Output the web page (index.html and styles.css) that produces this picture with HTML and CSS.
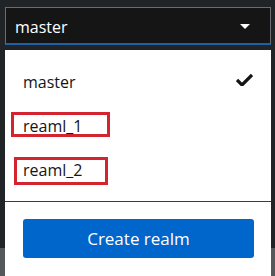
FILE: index.html
```html
<!DOCTYPE html>
<html lang="en">
<head>
    <meta charset="UTF-8">
    <meta name="viewport" content="width=device-width, initial-scale=1.0">
    <title>Realm selector</title>
    <link rel="stylesheet" href="styles.css">
</head>
<body>
    <div class="realm-select">
        <button class="toggle">
            <span class="toggle-text">master</span>
            <svg class="caret" width="10" height="5" viewBox="0 0 10 5"><path d="M0 0h10L5 5z" fill="#ffffff"/></svg>
        </button>
        <div class="menu">
            <ul class="menu-list">
                <li class="menu-item">
                    <span>master</span>
                    <svg class="check" width="17" height="13" viewBox="0 0 17 13"><path d="M1 7l5 5L16 2" fill="none" stroke="#151515" stroke-width="3.2"/></svg>
                </li>
                <li class="menu-item">
                    <span>reaml_1</span>
                    <span class="annot annot-one"></span>
                </li>
                <li class="menu-item">
                    <span>reaml_2</span>
                    <span class="annot annot-two"></span>
                </li>
            </ul>
            <hr class="divider">
            <div class="menu-footer">
                <button class="create-button">Create realm</button>
            </div>
        </div>
    </div>
</body>
</html>
```

FILE: styles.css
```css
body {
    margin: 0;
    font-family: "Open Sans", Arial, sans-serif;
    font-size: 16px;
    background: linear-gradient(#212427 248px, #55585b 248px);
    min-height: 276px;
}

.realm-select {
    padding: 7px 4px 0 5px;
}

.toggle {
    display: flex;
    align-items: center;
    justify-content: space-between;
    width: 100%;
    height: 38px;
    padding: 2px 20px 0 9px;
    background-color: #151515;
    border: 1px solid #6a6e73;
    border-bottom: 2px solid #1f5fa6;
    color: #ffffff;
    font-family: inherit;
    font-size: 16px;
    box-sizing: border-box;
}

.menu {
    margin-top: 5px;
    background-color: #ffffff;
    padding-top: 10px;
    height: 226px;
    box-sizing: border-box;
}

.menu-list {
    list-style: none;
    margin: 0;
    padding: 0;
}

.menu-item {
    position: relative;
    display: flex;
    align-items: center;
    justify-content: space-between;
    height: 44px;
    padding: 0 18px 0 18px;
    color: #151515;
    line-height: 24px;
}

.check {
    margin-top: -6px;
}

/* red annotation boxes drawn over the items */
.annot {
    position: absolute;
    border: 3px solid #d42430;
    box-sizing: border-box;
}

.annot-one {
    left: 6px;
    top: 8px;
    width: 99px;
    height: 25px;
}

.annot-two {
    left: 9px;
    top: 9px;
    width: 94px;
    height: 28px;
}

.divider {
    margin: 9px 0 0 0;
    border: 0;
    border-top: 1px solid #3a3d40;
}

.menu-footer {
    padding: 17px 17px 0 18px;
}

.create-button {
    width: 100%;
    height: 39px;
    background-color: #0066cc;
    color: #ffffff;
    border: 0;
    border-radius: 3px;
    font-family: inherit;
    font-size: 17px;
}
```
